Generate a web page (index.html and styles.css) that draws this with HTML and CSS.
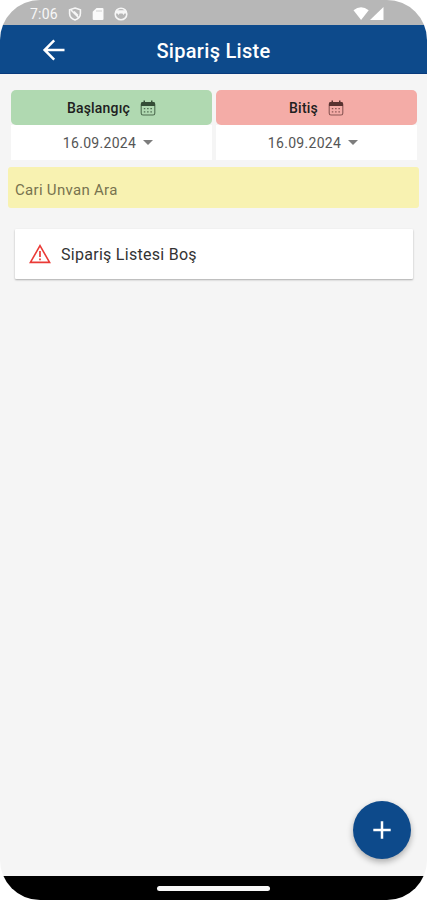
FILE: index.html
```html
<!DOCTYPE html>
<html lang="tr">
<head>
    <meta charset="UTF-8">
    <meta name="viewport" content="width=device-width, initial-scale=1.0">
    <title>Sipariş Liste</title>
    <link rel="stylesheet" href="styles.css">
</head>
<body>
    <div class="phone">
        <div class="status-bar">
            <span class="time">7:06</span>
            <svg class="status-icon" width="14" height="14" viewBox="0 0 14 14" fill="none" stroke="#f6f6f6" stroke-width="1.6">
                <path d="M7 1L12.4 2.8V6.5C12.4 9.6 10 12 7 13C4 12 1.6 9.6 1.6 6.5V2.8Z"/>
                <path d="M3 3L11 11M6 4.5L10 8.5"/>
            </svg>
            <svg class="status-icon" width="14" height="14" viewBox="0 0 14 14">
                <path fill="#fafafa" d="M5.5 1H11.5Q12.5 1 12.5 2V12Q12.5 13 11.5 13H2.7Q1.7 13 1.7 12V4.8Z"/>
                <path stroke="#d0d0d0" d="M6 3V5M8 3V5M10 3V5"/>
            </svg>
            <svg class="status-icon" width="14" height="14" viewBox="0 0 14 14">
                <circle cx="7" cy="7" r="5.8" fill="none" stroke="#f6f6f6" stroke-width="1.6"/>
                <path fill="#f6f6f6" d="M2 3.2H12V6.5H10.5L9.5 8L8.5 6.5H5.5L4.5 8L3.5 6.5H2Z"/>
            </svg>
            <svg class="signal" width="32" height="14" viewBox="0 0 32 14" fill="#ffffff">
                <path d="M0.5 3.2Q8 -2.6 15.7 3.2L8.1 13Z"/>
                <path d="M30.5 0V13H17Z"/>
            </svg>
        </div>

        <header class="header">
            <svg class="back" width="24" height="24" viewBox="0 0 24 24" fill="none" stroke="#ffffff" stroke-width="2.5">
                <path d="M22.5 12H3M12.2 2.4L2.6 12L12.2 21.6"/>
            </svg>
            <h1>Sipariş Liste</h1>
        </header>

        <main class="content">
            <div class="dates">
                <div class="date-box">
                    <div class="date-title start">
                        <span>Başlangıç</span>
                        <svg width="16" height="16" viewBox="0 0 16 16">
                            <rect x="1.2" y="2.5" width="13.6" height="12.5" rx="1.8" fill="none" stroke="#4d6b4f" stroke-width="1.1"/>
                            <path fill="#344c36" d="M1 6V3.5Q1 2 2.5 2H13.5Q15 2 15 3.5V6ZM3.5 0.5H5V3H3.5ZM11 0.5H12.5V3H11Z"/>
                            <path stroke="#4d6b4f" stroke-width="1.3" stroke-dasharray="1.5 1.8" d="M3.8 8.6H13M3.8 11.8H13"/>
                        </svg>
                    </div>
                    <div class="date-value">
                        <span>16.09.2024</span>
                        <i class="caret"></i>
                    </div>
                </div>
                <div class="date-box">
                    <div class="date-title end">
                        <span>Bitiş</span>
                        <svg width="16" height="16" viewBox="0 0 16 16">
                            <rect x="1.2" y="2.5" width="13.6" height="12.5" rx="1.8" fill="none" stroke="#8a5654" stroke-width="1.1"/>
                            <path fill="#583230" d="M1 6V3.5Q1 2 2.5 2H13.5Q15 2 15 3.5V6ZM3.5 0.5H5V3H3.5ZM11 0.5H12.5V3H11Z"/>
                            <path stroke="#8a5654" stroke-width="1.3" stroke-dasharray="1.5 1.8" d="M3.8 8.6H13M3.8 11.8H13"/>
                        </svg>
                    </div>
                    <div class="date-value">
                        <span>16.09.2024</span>
                        <i class="caret"></i>
                    </div>
                </div>
            </div>

            <input class="search" type="text" placeholder="Cari Unvan Ara">

            <div class="empty-card">
                <svg width="22" height="20" viewBox="0 0 22 20" fill="none" stroke="#ea3a36">
                    <path stroke-width="1.6" d="M11 1.7L20.6 18.4H1.4Z"/>
                    <path stroke-width="1.7" d="M11 7V13M11 14.4V16.2"/>
                </svg>
                <span>Sipariş Listesi Boş</span>
            </div>
        </main>

        <button class="add-button" aria-label="Ekle">
            <svg width="18" height="18" viewBox="0 0 18 18" stroke="#ffffff" stroke-width="2.5">
                <path d="M9 0.3V17.7M0.3 9H17.7"/>
            </svg>
        </button>

        <div class="nav-bar">
            <div class="nav-pill"></div>
        </div>
    </div>
</body>
</html>
```
FILE: styles.css
```css
body {
    margin: 0;
    background: #ffffff;
    font-family: Roboto, sans-serif;
}

.phone {
    position: relative;
    display: flex;
    flex-direction: column;
    height: 900px;
    overflow: hidden;
    border-radius: 40px;
    background: #f5f5f5;
}

.status-bar {
    display: flex;
    align-items: center;
    height: 25px;
    padding: 2px 42px 0 30px;
    box-sizing: border-box;
    background: #b7b7b7;
    color: #f8f8f8;
}

.time {
    width: 38px;
    font-size: 14px;
    letter-spacing: 0.2px;
}

.status-icon {
    margin-right: 9px;
}

.signal {
    margin-left: auto;
}

.header {
    display: grid;
    grid-template-columns: 42px 1fr 42px;
    align-items: center;
    height: 49px;
    padding-top: 2px;
    box-sizing: border-box;
    background: #0d4a8b;
    border-bottom: 1px solid #083a7c;
    color: #ffffff;
}

.back {
    margin-left: 42px;
}

.header h1 {
    margin: 2px 0 0;
    font-size: 20px;
    font-weight: 500;
    letter-spacing: 0.3px;
    text-align: center;
}

.content {
    flex: 1;
    padding: 16px 8px 0;
}

.dates {
    display: flex;
    gap: 4px;
    padding: 0 2px 0 3px;
}

.date-box {
    flex: 1;
}

.date-title {
    display: flex;
    justify-content: center;
    align-items: center;
    gap: 10px;
    height: 35px;
    border-radius: 5px;
    color: #202020;
    font-size: 14px;
    font-weight: 500;
    letter-spacing: 0.2px;
}

.start {
    background: #b0d9b1;
}

.end {
    background: #f4aca7;
}

.date-value {
    display: flex;
    justify-content: center;
    align-items: center;
    gap: 7px;
    height: 35px;
    padding-right: 7px;
    background: #ffffff;
    color: #555555;
    font-size: 14px;
    letter-spacing: 0.3px;
}

.caret {
    border: 5px solid transparent;
    border-top-color: #7d7d7d;
    border-bottom: 0;
}

.search {
    display: block;
    width: 100%;
    height: 41px;
    margin-top: 7px;
    padding: 5px 7px 0;
    box-sizing: border-box;
    border: none;
    border-radius: 3px;
    background: #f8f2b1;
    font-family: inherit;
    font-size: 15px;
    letter-spacing: 0.3px;
}

.search::placeholder {
    color: #77734f;
}

.empty-card {
    display: flex;
    align-items: center;
    gap: 10px;
    height: 50px;
    margin: 21px 6px 0 7px;
    padding-left: 14px;
    box-sizing: border-box;
    border-radius: 1px;
    background: #ffffff;
    box-shadow: 0 1px 2px rgba(0, 0, 0, 0.3);
    color: #333333;
    font-size: 16px;
    letter-spacing: 0.28px;
}

.add-button {
    position: absolute;
    right: 16px;
    bottom: 41px;
    display: flex;
    justify-content: center;
    align-items: center;
    width: 58px;
    height: 58px;
    padding: 0;
    border: none;
    border-radius: 50%;
    background: #0d4a8b;
    box-shadow: 0 3px 6px rgba(0, 0, 0, 0.3);
}

.nav-bar {
    display: flex;
    justify-content: center;
    align-items: center;
    height: 24px;
    background: #000000;
}

.nav-pill {
    width: 113px;
    height: 5px;
    border-radius: 3px;
    background: #f8f8f8;
}
```
